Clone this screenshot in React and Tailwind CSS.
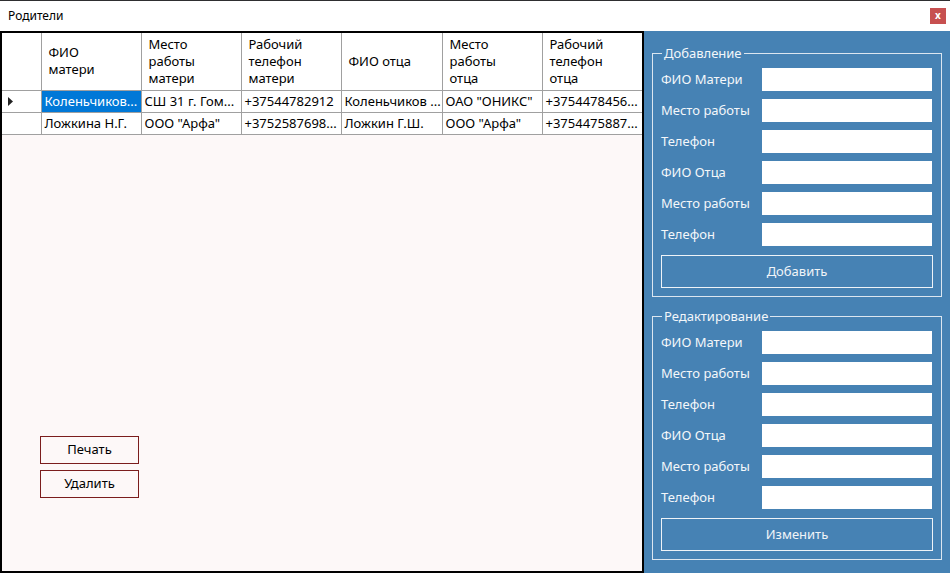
const columns = [
  ["ФИО", "матери"],
  ["Место", "работы", "матери"],
  ["Рабочий", "телефон", "матери"],
  ["ФИО отца"],
  ["Место", "работы", "отца"],
  ["Рабочий", "телефон", "отца"],
];

const colWidths = ["w-[100px]", "w-[100px]", "w-[100px]", "w-[101px]", "w-[100px]", "w-[100px]"];

const rows = [
  ["Коленьчиков...", "СШ 31 г. Гом...", "+37544782912", "Коленьчиков ...", "ОАО \"ОНИКС\"", "+3754478456..."],
  ["Ложкина Н.Г.", "ООО \"Арфа\"", "+3752587698...", "Ложкин Г.Ш.", "ООО \"Арфа\"", "+3754475887..."],
];

const fields = ["ФИО Матери", "Место работы", "Телефон", "ФИО Отца", "Место работы", "Телефон"];

function GroupBox({ title, action }) {
  return (
    <fieldset className="border border-[#dbe6f0] px-2 pb-[8px] pt-[6px]">
      <legend className="ml-[1px] px-[2px] text-[13px] leading-[18px] text-[#f2f6fa]">{title}</legend>
      <div className="flex flex-col gap-2">
        {fields.map((f, i) => (
          <div key={i} className="flex items-center h-[23px]">
            <span className="w-[101px] text-[13px] text-[#f4f7fa]">{f}</span>
            <input className="w-[170px] h-[23px] bg-white outline-none" />
          </div>
        ))}
      </div>
      <button className="mt-[9px] w-[272px] h-[33px] border border-[#eef3f8] text-[13px] text-[#f0f4f8]">
        {action}
      </button>
    </fieldset>
  );
}

export default function App() {
  return (
    <div className="w-[950px] h-[573px] flex flex-col bg-white border-t border-[#2e2e30] font-['Noto_Sans',sans-serif] text-black overflow-hidden">
      {/* title bar */}
      <div className="h-[30px] flex items-center justify-between pl-2 pr-[4px] shrink-0">
        <span className="text-[12px]">Родители</span>
        <div className="w-[16px] h-[16px] bg-[#c75050] flex items-center justify-center text-white text-[10px] font-bold leading-none pb-[2px]">
          x
        </div>
      </div>

      <div className="flex flex-1 min-h-0">
        {/* left: grid + buttons */}
        <div className="w-[644px] border-2 border-black bg-[#fdf8f8] flex flex-col">
          <table className="w-[640px] table-fixed border-collapse bg-white text-[13px]">
            <colgroup>
              <col className="w-[39px]" />
              {colWidths.map((w, i) => (
                <col key={i} className={w} />
              ))}
            </colgroup>
            <thead>
              <tr className="h-[57px]">
                <th className="border-r border-b border-[#a0a0a0]"></th>
                {columns.map((c, i) => (
                  <th key={i} className="border-r border-b border-[#a0a0a0] text-left font-normal pl-[7px] leading-[17px] align-middle last:border-r-0">
                    {c.map((l, j) => (
                      <div key={j}>{l}</div>
                    ))}
                  </th>
                ))}
              </tr>
            </thead>
            <tbody>
              {rows.map((r, ri) => (
                <tr key={ri} className="h-[22px]">
                  <td className="border-r border-b border-[#a0a0a0] pl-[6px]">
                    {ri === 0 && (
                      <svg width="6" height="9" viewBox="0 0 6 9">
                        <path d="M0 0 L5 4.5 L0 9 Z" fill="#222" />
                      </svg>
                    )}
                  </td>
                  {r.map((v, ci) => (
                    <td
                      key={ci}
                      className={`border-r border-b border-[#a0a0a0] last:border-r-0 whitespace-nowrap overflow-hidden px-[3px] leading-[21px] ${
                        ri === 0 && ci === 0 ? "bg-[#0078d7] text-white" : ""
                      }`}
                    >
                      {v}
                    </td>
                  ))}
                </tr>
              ))}
            </tbody>
          </table>

          <div className="flex-1" />
          <div className="flex flex-col gap-[6px] pl-[38px] pb-[73px]">
            <button className="w-[99px] h-[28px] border border-[#7b1d1d] text-[13px]">Печать</button>
            <button className="w-[99px] h-[28px] border border-[#7b1d1d] text-[13px]">Удалить</button>
          </div>
        </div>

        {/* right: edit panel */}
        <div className="flex-1 bg-[#4682b4] flex flex-col gap-[10px] pl-[8px] pr-[10px] pt-[13px]">
          <GroupBox title="Добавление" action="Добавить" />
          <GroupBox title="Редактирование" action="Изменить" />
        </div>
      </div>
    </div>
  );
}
